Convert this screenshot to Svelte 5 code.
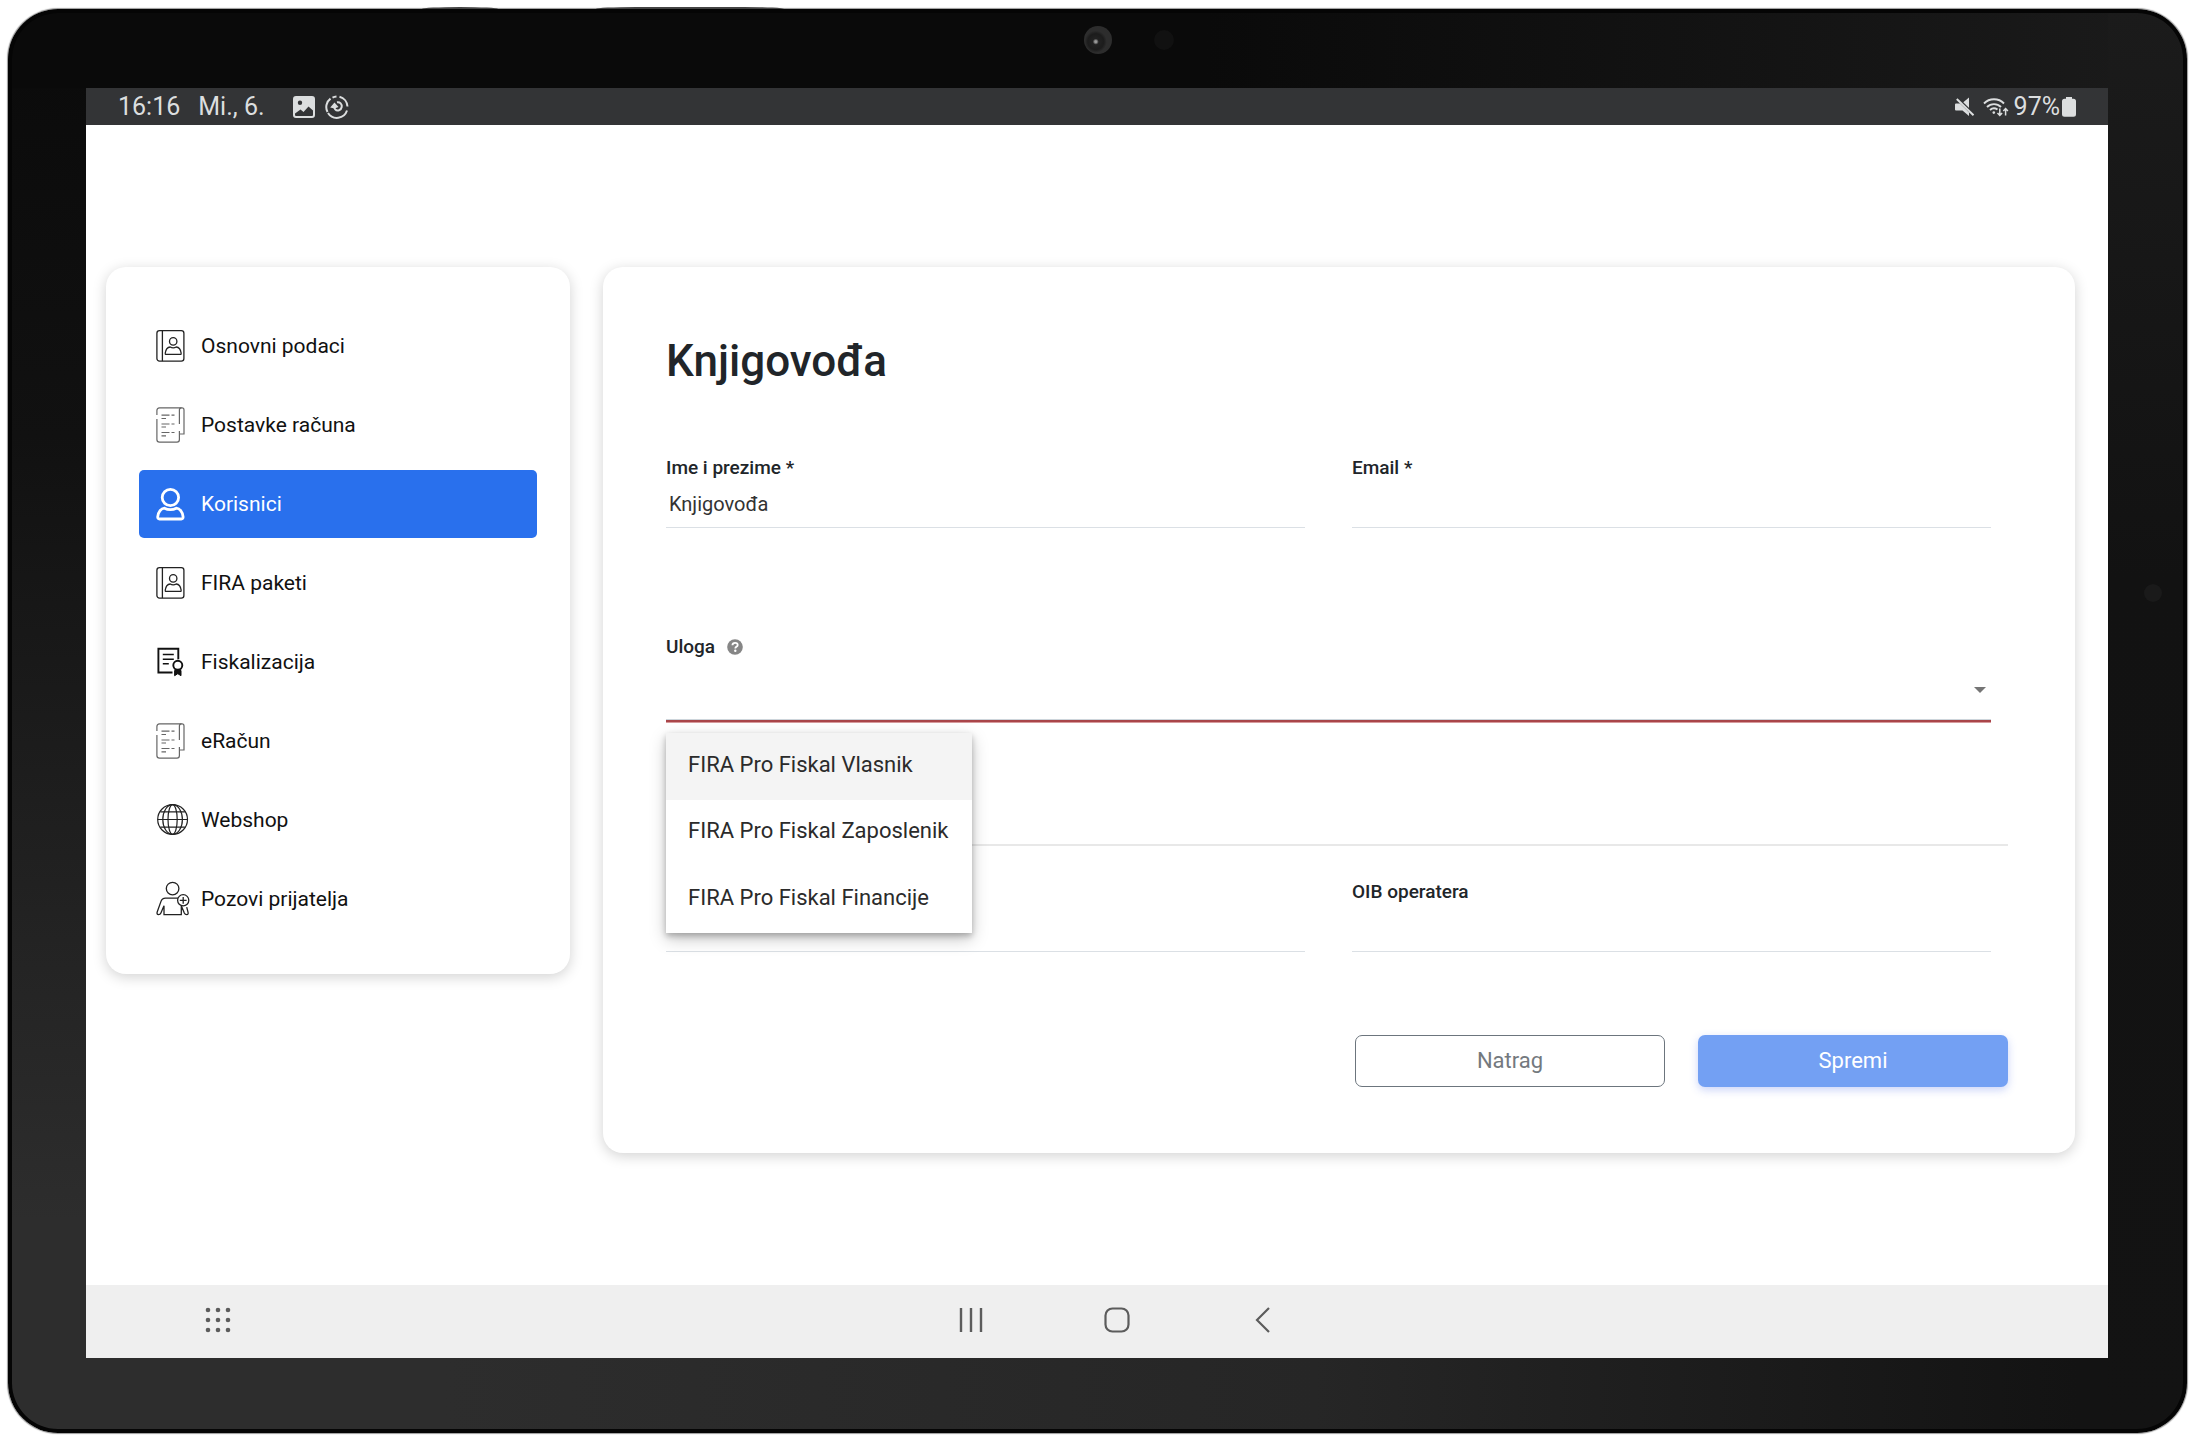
<script lang="ts">
  type MenuItem = {
    label: string;
    icon: string;
  };

  const menu: MenuItem[] = [
    { label: 'Osnovni podaci', icon: 'contact' },
    { label: 'Postavke računa', icon: 'receipt' },
    { label: 'Korisnici', icon: 'user' },
    { label: 'FIRA paketi', icon: 'contact' },
    { label: 'Fiskalizacija', icon: 'certificate' },
    { label: 'eRačun', icon: 'receipt' },
    { label: 'Webshop', icon: 'globe' },
    { label: 'Pozovi prijatelja', icon: 'invite' },
  ];

  const roles = ['FIRA Pro Fiskal Vlasnik', 'FIRA Pro Fiskal Zaposlenik', 'FIRA Pro Fiskal Financije'];

  let active = $state('Korisnici');
  let name = $state('Knjigovođa');
  let email = $state('');
  let operator = $state('');
  let oib = $state('');
  let role = $state('');
  let roleOpen = $state(true);

  function toggleRoles(event: MouseEvent) {
    event.preventDefault();
    roleOpen = !roleOpen;
  }

  function pickRole(value: string) {
    role = value;
    roleOpen = false;
  }
</script>

{#snippet menuIcon(icon: string)}
  <svg class="menu-icon" viewBox="0 0 34 36" fill="none" stroke="currentColor" aria-hidden="true">
    {#if icon === 'contact'}
      <g stroke="#222" stroke-width="1.3">
        <rect x="0.9" y="2.7" width="27" height="30.4" rx="2.6" />
        <path d="M6.4 2.7v30.4" />
        <circle cx="17.2" cy="13.4" r="3.7" />
        <path
          d="M10 26.4c-.6 0-.9-.4-.8-1 .5-4 2.6-6.2 5-6.4 1 .6 1.9.8 3 .8s2-.2 3-.8c2.4.2 4.5 2.4 5 6.4.1.6-.2 1-.8 1z"
        />
      </g>
    {:else if icon === 'receipt'}
      <g stroke="#666" stroke-width="1.2">
        <path d="M.9 8V3.5Q.9.9 3.5.9H26q2 0 2 2V27h-4.5" />
        <path d="M.9 12v20.5q0 2.6 2.6 2.6h17.5q2.4 0 2.4-2.6V24M23.4 17V3q0-2.1 2-2.1" />
        <path d="M5.5 8.2h8M15.5 8.2h3M5.5 11.5h4.5" />
        <path d="M5.5 17h8M15.5 17h3M5.5 20h4.5" />
        <path d="M5.5 25.5h8M15.5 25.5h3M5.5 28.8h4.5" />
      </g>
    {:else if icon === 'user'}
      <g stroke-width="2.8">
        <circle cx="14.4" cy="11.5" r="8.2" />
        <path
          d="M3.5 33c-1.3 0-1.9-.8-1.8-2.2.3-4.9 3.3-8.3 6.8-8.6 2 1.1 3.7 1.5 5.9 1.5s3.9-.4 5.9-1.5c3.5.3 6.5 3.7 6.8 8.6.1 1.4-.5 2.2-1.800 2.200z"
        />
      </g>
    {:else if icon === 'certificate'}
      <g stroke="#111" stroke-width="1.9">
        <path d="M16.5 28.5H2.4V4.7h19.9v10.5" />
        <path d="M6.8 10.6h11M6.8 15.2h11M6.8 19.8h6" stroke-width="1.5" />
        <circle cx="21.8" cy="21.3" r="4.5" />
        <path d="M18.6 26.5h6.4v5.2l-3.2-2-3.2 2z" fill="#111" stroke-width="1" />
      </g>
    {:else if icon === 'globe'}
      <g stroke="#222" stroke-width="1.2">
        <circle cx="16.6" cy="17.5" r="14.9" />
        <ellipse cx="16.6" cy="17.5" rx="9.8" ry="14.9" />
        <ellipse cx="16.6" cy="17.5" rx="4.6" ry="14.9" />
        <path d="M1.7 17.5h29.8M4.3 9.9h24.6M4.3 25.1h24.6" />
      </g>
    {:else}
      <g stroke="#222" stroke-width="1.3">
        <circle cx="16.6" cy="7.6" r="6.3" />
        <path
          d="M22 17.2H9.5c-2.5 0-3.9 1.4-4.7 3.7L1.2 31c-.5 1.5 0 2.6 1.3 2.6 1.2 0 1.9-.4 2.4-1.7L8 24.8v8.8h17.3v-8.8l3 7.1c.6 1.3 1.2 1.7 2.4 1.7 1.3 0 1.7-1 1.3-2.5l-1.3-5"
        />
        <circle cx="27.2" cy="19.3" r="5.6" />
        <path d="M27.2 15.9v6.8M23.8 19.3h6.8" />
      </g>
    {/if}
  </svg>
{/snippet}

<div class="tablet">
  <span class="side-key key-power"></span>
  <span class="side-key key-volume"></span>

  <div class="bezel-top">
    <span class="camera"></span>
  </div>
  <span class="bezel-sensor"></span>

  <div class="screen">
    <header class="status-bar">
      <div class="status-group">
        <span class="clock">16:16</span>
        <span class="date">Mi., 6.</span>
        <svg width="22" height="24" viewBox="0 0 22 24" aria-hidden="true">
          <path
            fill="#dcdedf"
            fill-rule="evenodd"
            d="M3 1h16a3 3 0 0 1 3 3v16a3 3 0 0 1-3 3H3a3 3 0 0 1-3-3V4a3 3 0 0 1 3-3zm4 4.500a2.200 2.200 0 1 0 0 4.400 2.200 2.200 0 0 0 0-4.400zM2 18.500V20q0 1 1 1h16q1 0 1-1v-4.500l-4.500-4-5 5.500-3-2.500z"
          />
        </svg>
        <svg class="sync" width="24" height="24" viewBox="0 0 24 24" fill="none" stroke="#dcdedf" stroke-width="2" aria-hidden="true">
          <path d="M14.5 1.7a10.600 10.600 0 0 1 8 9.800M22 15.5A10.600 10.600 0 0 1 3 18M2.500 17A10.600 10.600 0 0 1 5.500 3.600M7.500 2.600A10 10 0 0 1 11.500 1.400" />
          <path d="M12 7.300c3-.5 5.200 1.700 4.700 4.700-.5 3.200-4.500 4.600-6.500 2.300-.8-1-1-2-.7-3" />
          <path d="M5.200 12.500l4.300-5 4 4.500-4 1.500z" fill="#dcdedf" stroke="none" />
        </svg>
      </div>
      <div class="status-group status-right">
        <svg width="20" height="20" viewBox="0 0 20 20" aria-hidden="true">
          <path fill="#dcdedf" d="M1 6.500h4L14 15v4l-6.500-5.500H1q-1 0-1-1v-5q0-1 1-1zM8 5.500L14 .5v10.500z" />
          <path d="M2 1l16.500 17" stroke="#333436" stroke-width="3" />
          <path d="M1.800 2L18.500 18.300" stroke="#dcdedf" stroke-width="2" />
        </svg>
        <svg width="26" height="20" viewBox="0 0 26 20" fill="none" stroke="#dcdedf" stroke-width="1.9" aria-hidden="true">
          <path d="M1 6.500a14 14 0 0 1 20 0M4 10a10 10 0 0 1 14 0M7 13a6 6 0 0 1 7.500-.5" />
          <circle cx="10.800" cy="15.600" r="1.300" fill="#dcdedf" stroke="none" />
          <path d="M16.800 11.500v6.500M14.500 16l2.300 2.400 2.300-2.400M22.600 18.500v-6.500M20.300 14l2.300-2.400 2.300 2.400" stroke-width="1.500" />
        </svg>
        <span class="battery-level">97%</span>
        <svg width="14" height="20" viewBox="0 0 14 20" aria-hidden="true">
          <path fill="#dcdedf" d="M4 0h6v1.800h1.500A2.500 2.500 0 0 1 14 4.300v13a2.500 2.500 0 0 1-2.500 2.500h-9A2.500 2.500 0 0 1 0 17.300v-13a2.500 2.500 0 0 1 2.500-2.500H4z" />
        </svg>
      </div>
    </header>

    <main class="content">
      <nav class="card menu" aria-label="Postavke">
        {#each menu as item (item.label)}
          <a
            href="#{item.icon}"
            class="menu-item"
            class:active={active === item.label}
            onclick={() => (active = item.label)}
          >
            {@render menuIcon(item.icon)}
            <span>{item.label}</span>
          </a>
        {/each}
      </nav>

      <form class="card user-form" onsubmit={(event) => event.preventDefault()}>
        <h1>Knjigovođa</h1>

        <div class="field-row">
          <div class="field">
            <label for="name">Ime i prezime *</label>
            <input id="name" type="text" bind:value={name} />
          </div>
          <div class="field">
            <label for="email">Email *</label>
            <input id="email" type="email" bind:value={email} />
          </div>
        </div>

        <div class="field role-field">
          <div class="label-row">
            <label for="role">Uloga</label>
            <svg width="16" height="16" viewBox="0 0 16 16" aria-hidden="true">
              <circle cx="8" cy="8" r="7.800" fill="#868686" />
              <path d="M5.400 6.200c.1-1.600 1.200-2.400 2.700-2.400s2.600.8 2.600 2.100c0 1.900-2.400 1.900-2.400 3.500" fill="none" stroke="#fff" stroke-width="1.800" />
              <circle cx="8.300" cy="11.800" r="1.200" fill="#fff" />
            </svg>
          </div>
          <div class="select-wrap">
            <select id="role" bind:value={role} onmousedown={toggleRoles}>
              <option value=""></option>
              {#each roles as option (option)}
                <option value={option}>{option}</option>
              {/each}
            </select>
            <svg class="caret" width="12" height="6" viewBox="0 0 12 6" aria-hidden="true">
              <path d="M0 0h12L6 6z" fill="#757575" />
            </svg>
          </div>

          {#if roleOpen}
            <div class="role-menu" role="listbox" aria-label="Uloga">
              {#each roles as option, index (option)}
                <button
                  type="button"
                  role="option"
                  aria-selected={role === option}
                  class:highlighted={index === 0}
                  onclick={() => pickRole(option)}>{option}</button
                >
              {/each}
            </div>
          {/if}
        </div>

        <hr />

        <div class="field-row">
          <div class="field">
            <input type="text" aria-label="Operater" bind:value={operator} />
          </div>
          <div class="field">
            <label for="oib">OIB operatera</label>
            <input id="oib" type="text" bind:value={oib} />
          </div>
        </div>

        <div class="actions">
          <button type="button" class="btn btn-back">Natrag</button>
          <button type="submit" class="btn btn-save">Spremi</button>
        </div>
      </form>
    </main>

    <footer class="nav-bar">
      <button type="button" aria-label="Apps">
        <svg width="26" height="26" viewBox="0 0 26 26" fill="#5c5c5c">
          {#each [3, 13, 23] as y}
            {#each [3, 13, 23] as x}
              <circle cx={x} cy={y} r="2.3" />
            {/each}
          {/each}
        </svg>
      </button>
      <div class="nav-keys">
        <button type="button" aria-label="Recent">
          <svg width="26" height="26" viewBox="0 0 26 26" stroke="#5c5c5c" stroke-width="2.4">
            <path d="M3 1v24M13 1v24M23 1v24" />
          </svg>
        </button>
        <button type="button" aria-label="Home">
          <svg width="26" height="26" viewBox="0 0 26 26" fill="none" stroke="#5c5c5c" stroke-width="2.2">
            <rect x="1.5" y="1.5" width="23" height="23" rx="7" />
          </svg>
        </button>
        <button type="button" aria-label="Back">
          <svg width="26" height="26" viewBox="0 0 26 26" fill="none" stroke="#5c5c5c" stroke-width="2.2">
            <path d="M19 1L7 13l12 12" />
          </svg>
        </button>
      </div>
    </footer>
  </div>
</div>

<style>
  :global(body) {
    margin: 0;
    background: #fff;
    font-family: Roboto, sans-serif;
  }

  .tablet {
    position: relative;
    box-sizing: border-box;
    display: grid;
    grid-template: 79px 1fr 75px / 78px minmax(0, 1fr) 79px;
    min-height: calc(100vh - 15px);
    margin: 9px 10px 6px 8px;
    border-radius: 50px;
    background:
      linear-gradient(#1b1b1b, #121212 40%, #131313) right / 79px 100% no-repeat,
      linear-gradient(to right, #0a0a0a 55%, #1b1b1b) top / 100% 79px no-repeat,
      linear-gradient(to right, #2d2d2d 20%, #262626 60%, #131313 95%) bottom / 100% 75px no-repeat,
      linear-gradient(#0a0a0a, #111 30%, #2d2d2d 85%);
    box-shadow:
      inset 0 0 0 4px #050505,
      0 0 1px 1px #999;
  }

  .side-key {
    position: absolute;
    top: -2px;
    height: 2px;
    border-radius: 40px 40px 0 0 / 2px 2px 0 0;
    background: #444;
  }

  .key-power {
    left: 19%;
    width: 76px;
  }

  .key-volume {
    left: 27%;
    width: 188px;
  }

  .bezel-top {
    grid-area: 1 / 1 / 2 / 4;
    display: flex;
    justify-content: center;
    padding-top: 17px;
  }

  .camera {
    position: relative;
    width: 28px;
    height: 28px;
    border-radius: 50%;
    background: radial-gradient(circle at 42% 56%, #999 0 1px, #222 3px, #1c1c1c 8px, #2d2d2d 11px);
  }

  .camera::after {
    content: '';
    position: absolute;
    top: 4px;
    left: 70px;
    width: 20px;
    height: 20px;
    border-radius: 50%;
    background: #111;
  }

  .bezel-sensor {
    grid-area: 2 / 3;
    width: 18px;
    height: 18px;
    margin: 496px 0 0 36px;
    border-radius: 50%;
    background: #1a1a1a;
  }

  .screen {
    grid-area: 2 / 2;
    display: flex;
    flex-direction: column;
    background: #fff;
  }

  .status-bar {
    display: flex;
    justify-content: space-between;
    align-items: center;
    height: 37px;
    padding: 0 32px 0 32px;
    background: #333436;
    color: #dcdedf;
    font-size: 25px;
    line-height: 36px;
  }

  .status-group {
    display: flex;
    align-items: center;
  }

  .date {
    margin: 0 28px 0 18px;
  }

  .sync {
    margin-left: 10px;
  }

  .status-right svg + svg {
    margin: 0 5px 0 8px;
  }

  .battery-level {
    margin-right: 2px;
  }

  .content {
    flex: 1;
    display: flex;
    align-items: flex-start;
    gap: 33px;
    padding: 142px 33px 132px 20px;
  }

  .card {
    box-sizing: border-box;
    border-radius: 20px;
    background: #fff;
    box-shadow: 0 3px 14px rgb(0 0 0 / 18%);
  }

  .menu {
    flex: 0 0 464px;
    display: grid;
    gap: 11px;
    padding: 45px 33px 41px;
  }

  .menu-item {
    display: flex;
    align-items: center;
    gap: 11px;
    height: 68px;
    padding: 0 17px;
    border-radius: 5px;
    color: #111;
    font-size: 21px;
    line-height: 28px;
    text-decoration: none;
  }

  .menu-item.active {
    background: #2970ed;
    color: #fff;
  }

  .menu-icon {
    width: 34px;
    height: 36px;
  }

  .user-form {
    flex: 1;
    min-width: 0;
    padding: 67px 67px 66px 63px;
    color: #212529;
  }

  h1 {
    margin: 0 0 67px;
    font-size: 44px;
    font-weight: 500;
    line-height: 54px;
  }

  .field-row {
    display: grid;
    grid-template-columns: 1fr 1fr;
    align-items: end;
    gap: 47px;
    margin-right: 17px;
  }

  .field {
    display: flex;
    flex-direction: column;
  }

  label {
    font-size: 19px;
    font-weight: 500;
    line-height: 26px;
  }

  input {
    box-sizing: border-box;
    width: 100%;
    height: 47px;
    padding: 0 3px;
    border: 0;
    border-bottom: 1px solid #dbe0e5;
    outline: none;
    background: transparent;
    color: #333;
    font: 20px Roboto, sans-serif;
  }

  .role-field {
    position: relative;
    margin: 106px 17px 0 0;
  }

  .label-row {
    display: flex;
    align-items: center;
    gap: 12px;
  }

  .select-wrap {
    position: relative;
    display: flex;
  }

  select {
    box-sizing: border-box;
    width: 100%;
    height: 60px;
    padding: 0 24px 0 3px;
    border: 0;
    border-bottom: 1px solid #cdd5db;
    border-radius: 0;
    outline: none;
    appearance: none;
    background: transparent;
    box-shadow:
      0 2px #a94549,
      0 3px #d79a9c;
    color: #333;
    font: 20px Roboto, sans-serif;
  }

  .caret {
    position: absolute;
    right: 5px;
    top: 27px;
    pointer-events: none;
  }

  .role-menu {
    position: absolute;
    z-index: 1;
    top: calc(100% + 13px);
    left: 0;
    display: grid;
    grid-auto-rows: 1fr;
    width: 306px;
    height: 200px;
    background: #fff;
    box-shadow:
      0 3px 6px rgb(0 0 0 / 24%),
      0 6px 16px rgb(0 0 0 / 22%);
  }

  .role-menu button {
    padding: 0 22px 4px;
    border: 0;
    background: transparent;
    color: #2b2b2b;
    font: 22px Roboto, sans-serif;
    text-align: left;
    white-space: nowrap;
  }

  .role-menu .highlighted {
    background: #f4f4f4;
  }

  hr {
    height: 2px;
    margin: 124px 0 33px;
    border: 0;
    background: #e8e8e8;
  }

  .actions {
    display: flex;
    justify-content: flex-end;
    gap: 33px;
    margin-top: 83px;
  }

  .btn {
    box-sizing: border-box;
    width: 310px;
    height: 52px;
    padding: 0 0 2px;
    border: 0;
    border-radius: 7px;
    font: 22px Roboto, sans-serif;
  }

  .btn-back {
    border: 1px solid #6c757d;
    background: #fff;
    color: #74797e;
  }

  .btn-save {
    background: #73a0f3;
    color: #fff;
    box-shadow: 0 3px 8px rgb(70 100 230 / 28%);
  }

  .nav-bar {
    box-sizing: border-box;
    display: flex;
    align-items: center;
    height: 73px;
    padding: 0 105px 4px 119px;
    background: #efefef;
  }

  .nav-bar button {
    display: flex;
    padding: 0;
    border: 0;
    background: none;
  }

  .nav-keys {
    flex: 1;
    display: flex;
    justify-content: center;
    gap: 120px;
  }
</style>
